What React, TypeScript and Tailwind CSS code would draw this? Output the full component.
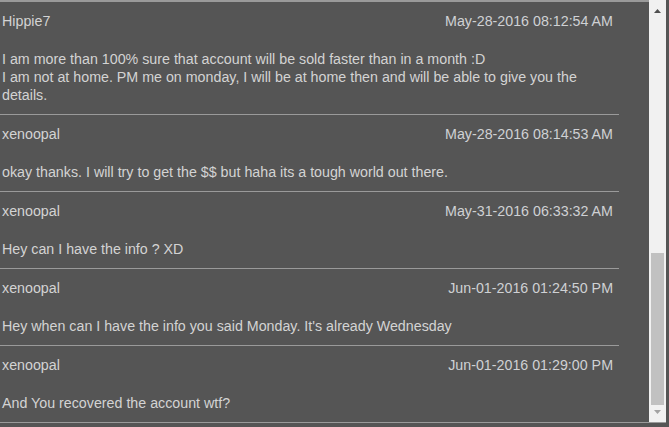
import React from 'react';

type Message = {
  user: string;
  date: string;
  lines: string[];
};

const messages: Message[] = [
  {
    user: 'Hippie7',
    date: 'May-28-2016 08:12:54 AM',
    lines: [
      'I am more than 100% sure that account will be sold faster than in a month :D',
      'I am not at home. PM me on monday, I will be at home then and will be able to give you the details.',
    ],
  },
  {
    user: 'xenoopal',
    date: 'May-28-2016 08:14:53 AM',
    lines: ['okay thanks. I will try to get the $$ but haha its a tough world out there.'],
  },
  {
    user: 'xenoopal',
    date: 'May-31-2016 06:33:32 AM',
    lines: ['Hey can I have the info ? XD'],
  },
  {
    user: 'xenoopal',
    date: 'Jun-01-2016 01:24:50 PM',
    lines: ["Hey when can I have the info you said Monday. It's already Wednesday"],
  },
  {
    user: 'xenoopal',
    date: 'Jun-01-2016 01:29:00 PM',
    lines: ['And You recovered the account wtf?'],
  },
];

function MessageRow({ msg, last }: { msg: Message; last: boolean }) {
  return (
    <div className={last ? 'w-[619px] pl-[2px] pr-[6px] pt-[10px] pb-[10px]' : 'w-[619px] border-b border-[#9a9a9a] pl-[2px] pr-[6px] pt-[10px] pb-[10px]'}>
      <div className="flex items-center justify-between leading-[18px]">
        <span>{msg.user}</span>
        <span className="text-[#cfd1d4]">{msg.date}</span>
      </div>
      <div className="mt-[20px] leading-[18px]">
        {msg.lines.map((line, i) => (
          <div key={i}>{line}</div>
        ))}
      </div>
    </div>
  );
}

function Arrow({ down, color }: { down?: boolean; color: string }) {
  return (
    <svg width="7" height="4" viewBox="0 0 7 4" className="block">
      <path d={down ? 'M0 0 L7 0 L3.5 4 Z' : 'M0 4 L3.5 0 L7 4 Z'} fill={color} />
    </svg>
  );
}

export default function App() {
  return (
    <div className="h-[427px] w-[669px] overflow-hidden bg-[#555555] font-['Liberation_Sans',Arial,sans-serif] text-[14.25px] text-[#d3d3d3]">
      <div className="flex h-[423px] w-[666px] border-b border-[#9a9a9a]">
        <div className="flex-1 overflow-hidden border-t-2 border-[#9a9a9a]">
          {messages.map((m, i) => (
            <MessageRow key={i} msg={m} last={i === messages.length - 1} />
          ))}
        </div>
        <div className="flex w-[17px] flex-col bg-[#f1f1f1]">
          <div className="flex h-[17px] justify-center pt-[9px]">
            <Arrow color="#505050" />
          </div>
          <div className="flex flex-1 flex-col justify-end">
            <div className="mx-[2px] h-[152px] bg-[#c1c1c1]" />
          </div>
          <div className="flex h-[17px] justify-center pt-[5px]">
            <Arrow down color="#a3a3a3" />
          </div>
        </div>
      </div>
    </div>
  );
}
